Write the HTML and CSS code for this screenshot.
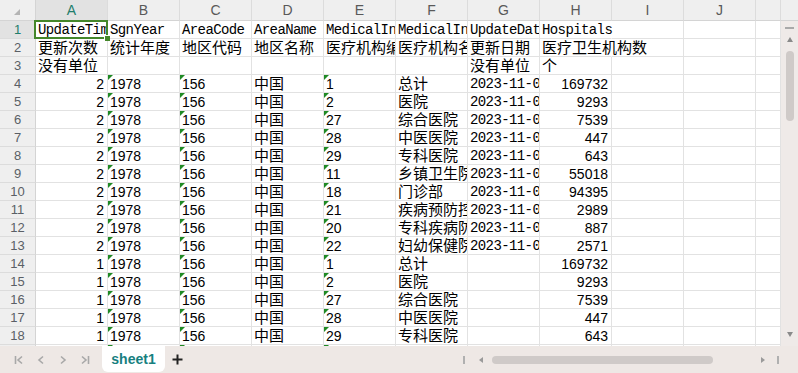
FILE: index.html
```html
<!DOCTYPE html>
<html lang="zh">
<head>
<meta charset="utf-8">
<title>sheet1</title>
<link rel="stylesheet" href="styles.css">
</head>
<body>
<div class="app">
  <div class="main">
    <div class="sheet">
      <div class="corner"><svg width="6" height="6" viewBox="0 0 6 6"><polygon points="6,0 6,6 0,6" fill="#b4b4b4"/></svg></div>
      <div class="ch on">A</div><div class="ch">B</div><div class="ch">C</div><div class="ch">D</div><div class="ch">E</div><div class="ch">F</div><div class="ch">G</div><div class="ch">H</div><div class="ch">I</div><div class="ch">J</div><div class="ch"></div>

      <div class="rh on">1</div><div class="c m">UpdateTime</div><div class="c m">SgnYear</div><div class="c m">AreaCode</div><div class="c m">AreaName</div><div class="c m">MedicalInstitutionCode</div><div class="c m">MedicalInstitutionName</div><div class="c m">UpdateDate</div><div class="c m spill">Hospitals</div><div class="c"></div><div class="c"></div><div class="c"></div>
      <div class="rh">2</div><div class="c">更新次数</div><div class="c">统计年度</div><div class="c">地区代码</div><div class="c">地区名称</div><div class="c">医疗机构编码</div><div class="c">医疗机构名称</div><div class="c">更新日期</div><div class="c spill">医疗卫生机构数</div><div class="c"></div><div class="c"></div><div class="c"></div>
      <div class="rh">3</div><div class="c">没有单位</div><div class="c"></div><div class="c"></div><div class="c"></div><div class="c"></div><div class="c"></div><div class="c">没有单位</div><div class="c">个</div><div class="c"></div><div class="c"></div><div class="c"></div>

      <div class="rh">4</div><div class="c n r">2</div><div class="c n t">1978</div><div class="c n t">156</div><div class="c">中国</div><div class="c n t">1</div><div class="c">总计</div><div class="c m">2023-11-01</div><div class="c n r">169732</div><div class="c"></div><div class="c"></div><div class="c"></div>
      <div class="rh">5</div><div class="c n r">2</div><div class="c n t">1978</div><div class="c n t">156</div><div class="c">中国</div><div class="c n t">2</div><div class="c">医院</div><div class="c m">2023-11-01</div><div class="c n r">9293</div><div class="c"></div><div class="c"></div><div class="c"></div>
      <div class="rh">6</div><div class="c n r">2</div><div class="c n t">1978</div><div class="c n t">156</div><div class="c">中国</div><div class="c n t">27</div><div class="c">综合医院</div><div class="c m">2023-11-01</div><div class="c n r">7539</div><div class="c"></div><div class="c"></div><div class="c"></div>
      <div class="rh">7</div><div class="c n r">2</div><div class="c n t">1978</div><div class="c n t">156</div><div class="c">中国</div><div class="c n t">28</div><div class="c">中医医院</div><div class="c m">2023-11-01</div><div class="c n r">447</div><div class="c"></div><div class="c"></div><div class="c"></div>
      <div class="rh">8</div><div class="c n r">2</div><div class="c n t">1978</div><div class="c n t">156</div><div class="c">中国</div><div class="c n t">29</div><div class="c">专科医院</div><div class="c m">2023-11-01</div><div class="c n r">643</div><div class="c"></div><div class="c"></div><div class="c"></div>
      <div class="rh">9</div><div class="c n r">2</div><div class="c n t">1978</div><div class="c n t">156</div><div class="c">中国</div><div class="c n t">11</div><div class="c">乡镇卫生院</div><div class="c m">2023-11-01</div><div class="c n r">55018</div><div class="c"></div><div class="c"></div><div class="c"></div>
      <div class="rh">10</div><div class="c n r">2</div><div class="c n t">1978</div><div class="c n t">156</div><div class="c">中国</div><div class="c n t">18</div><div class="c">门诊部</div><div class="c m">2023-11-01</div><div class="c n r">94395</div><div class="c"></div><div class="c"></div><div class="c"></div>
      <div class="rh">11</div><div class="c n r">2</div><div class="c n t">1978</div><div class="c n t">156</div><div class="c">中国</div><div class="c n t">21</div><div class="c">疾病预防控制中心</div><div class="c m">2023-11-01</div><div class="c n r">2989</div><div class="c"></div><div class="c"></div><div class="c"></div>
      <div class="rh">12</div><div class="c n r">2</div><div class="c n t">1978</div><div class="c n t">156</div><div class="c">中国</div><div class="c n t">20</div><div class="c">专科疾病防治院</div><div class="c m">2023-11-01</div><div class="c n r">887</div><div class="c"></div><div class="c"></div><div class="c"></div>
      <div class="rh">13</div><div class="c n r">2</div><div class="c n t">1978</div><div class="c n t">156</div><div class="c">中国</div><div class="c n t">22</div><div class="c">妇幼保健院</div><div class="c m">2023-11-01</div><div class="c n r">2571</div><div class="c"></div><div class="c"></div><div class="c"></div>
      <div class="rh">14</div><div class="c n r">1</div><div class="c n t">1978</div><div class="c n t">156</div><div class="c">中国</div><div class="c n t">1</div><div class="c">总计</div><div class="c"></div><div class="c n r">169732</div><div class="c"></div><div class="c"></div><div class="c"></div>
      <div class="rh">15</div><div class="c n r">1</div><div class="c n t">1978</div><div class="c n t">156</div><div class="c">中国</div><div class="c n t">2</div><div class="c">医院</div><div class="c"></div><div class="c n r">9293</div><div class="c"></div><div class="c"></div><div class="c"></div>
      <div class="rh">16</div><div class="c n r">1</div><div class="c n t">1978</div><div class="c n t">156</div><div class="c">中国</div><div class="c n t">27</div><div class="c">综合医院</div><div class="c"></div><div class="c n r">7539</div><div class="c"></div><div class="c"></div><div class="c"></div>
      <div class="rh">17</div><div class="c n r">1</div><div class="c n t">1978</div><div class="c n t">156</div><div class="c">中国</div><div class="c n t">28</div><div class="c">中医医院</div><div class="c"></div><div class="c n r">447</div><div class="c"></div><div class="c"></div><div class="c"></div>
      <div class="rh">18</div><div class="c n r">1</div><div class="c n t">1978</div><div class="c n t">156</div><div class="c">中国</div><div class="c n t">29</div><div class="c">专科医院</div><div class="c"></div><div class="c n r">643</div><div class="c"></div><div class="c"></div><div class="c"></div>
      <div class="rh">19</div><div class="c n r">1</div><div class="c n t">1978</div><div class="c n t">156</div><div class="c">中国</div><div class="c n t">11</div><div class="c">乡镇卫生院</div><div class="c"></div><div class="c n r">55018</div><div class="c"></div><div class="c"></div><div class="c"></div>

      <div class="selbox"><span class="handle"></span></div>
    </div>
    <div class="vscroll">
      <div class="vs-head"></div>
      <div class="vs-track">
        <span class="vs-dash"></span>
        <svg class="vs-up" width="6" height="5" viewBox="0 0 6 5"><polygon points="3,0 6,5 0,5" fill="#8a8a8a"/></svg>
        <span class="vs-thumb"></span>
        <span class="vs-fill"></span>
        <svg class="vs-down" width="6" height="5" viewBox="0 0 6 5"><polygon points="0,0 6,0 3,5" fill="#8a8a8a"/></svg>
      </div>
    </div>
  </div>
  <div class="tabbar">
    <div class="nav">
      <svg width="10" height="10" viewBox="0 0 10 10"><path d="M1.5 1v8M8 1.5L4 5l4 3.5" fill="none" stroke="#a8a8a8" stroke-width="1.6"/></svg>
      <svg width="10" height="10" viewBox="0 0 10 10"><path d="M7 1.5L3 5l4 3.5" fill="none" stroke="#a8a8a8" stroke-width="1.6"/></svg>
      <svg width="10" height="10" viewBox="0 0 10 10"><path d="M3 1.5L7 5l-4 3.5" fill="none" stroke="#a8a8a8" stroke-width="1.6"/></svg>
      <svg width="10" height="10" viewBox="0 0 10 10"><path d="M2 1.5L6 5l-4 3.5M8.5 1v8" fill="none" stroke="#a8a8a8" stroke-width="1.6"/></svg>
    </div>
    <div class="tab">sheet1</div>
    <svg class="plus" width="11" height="11" viewBox="0 0 11 11"><path d="M5.5 0.5v10M0.5 5.5h10" stroke="#222" stroke-width="2"/></svg>
    <div class="hscroll">
      <span class="hs-bar"></span>
      <svg class="hs-left" width="4" height="6" viewBox="0 0 4 6"><polygon points="4,0 4,6 0,3" fill="#9a9a9a"/></svg>
      <span class="hs-thumb"></span>
      <svg class="hs-right" width="4" height="6" viewBox="0 0 4 6"><polygon points="0,0 4,3 0,6" fill="#9a9a9a"/></svg>
      <span class="hs-bar end"></span>
    </div>
  </div>
</div>
</body>
</html>
```

FILE: styles.css
```css
* { box-sizing: border-box; margin: 0; padding: 0; }
html, body { width: 798px; height: 373px; overflow: hidden; background: #fff; }
body { font-family: "Liberation Sans", "Noto Sans CJK SC", sans-serif; }

.app { display: flex; flex-direction: column; height: 373px; }
.main { display: flex; height: 346px; }

.sheet {
  position: relative;
  display: grid;
  grid-template-columns: 36px repeat(10, 72px) 25px;
  grid-template-rows: 21px;
  grid-auto-rows: 18px;
  align-content: start;
  width: 781px;
  height: 346px;
  overflow: hidden;
}

.corner {
  background: #efefef;
  border-right: 1px solid #d4d4d4;
  border-bottom: 1px solid #d4d4d4;
  display: flex;
  align-items: flex-start;
  justify-content: flex-start;
  padding: 9px 0 0 14px;
}

.ch {
  background: #efefef;
  border-right: 1px solid #dcdcdc;
  border-bottom: 1px solid #d4d4d4;
  text-align: center;
  font-size: 14px;
  line-height: 20px;
  color: #595959;
}
.rh {
  background: #efefef;
  border-right: 1px solid #d4d4d4;
  border-bottom: 1px solid #dcdcdc;
  text-align: center;
  font-size: 13px;
  line-height: 17px;
  color: #5a5f66;
}
.ch.on, .rh.on { background: #e2e2e2; color: #1f7d6b; }

.c {
  position: relative;
  border-right: 1px solid #e2e2e2;
  border-bottom: 1px solid #e2e2e2;
  overflow: hidden;
  white-space: nowrap;
  padding: 0 2px;
  font-family: "Noto Sans CJK SC", sans-serif;
  font-size: 15px;
  line-height: 16px;
  color: #000;
}
.c.m {
  font-family: "Liberation Mono", "Noto Sans CJK SC", monospace;
  font-size: 14px;
  letter-spacing: -0.6px;
  line-height: 18px;
}
.c.n {
  font-family: "Liberation Sans", sans-serif;
  font-size: 14px;
  line-height: 19px;
}
.c.r { text-align: right; padding-right: 3px; }
.c.spill { overflow: visible; border-right-color: transparent; z-index: 1; }

.c.t::before {
  content: "";
  position: absolute;
  left: 0;
  top: 0;
  border-top: 5px solid #1f8a24;
  border-right: 5px solid transparent;
}

.selbox {
  position: absolute;
  grid-column: 2 / 3;
  grid-row: 2 / 3;
  top: -1px;
  left: -2px;
  right: 0;
  bottom: 0;
  border: 2px solid #44872a;
  z-index: 2;
}
.handle {
  position: absolute;
  right: -4px;
  bottom: -4px;
  width: 6px;
  height: 6px;
  background: #44872a;
  border-left: 1px solid #fff;
  border-top: 1px solid #fff;
}

.vscroll { width: 17px; display: flex; flex-direction: column; }
.vs-head { height: 21px; background: #efefef; border-bottom: 1px solid #d4d4d4; }
.vs-track {
  flex: 1;
  background: #efeae8;
  display: flex;
  flex-direction: column;
  align-items: center;
}
.vs-dash { width: 9px; height: 2px; background: #a9a9a9; margin-top: 6px; }
.vs-up { margin-top: 8px; }
.vs-thumb { width: 8px; height: 70px; border-radius: 4px; background: #cfcac8; margin-top: 9px; }
.vs-fill { flex: 1; }
.vs-down { margin-bottom: 9px; }

.tabbar {
  height: 27px;
  background: #eee8e5;
  display: flex;
  align-items: center;
}
.nav {
  width: 102px;
  display: flex;
  align-items: center;
  gap: 12px;
  padding-left: 14px;
}
.tab {
  align-self: flex-start;
  width: 63px;
  height: 26px;
  background: #fff;
  border-radius: 0 0 6px 6px;
  display: flex;
  align-items: center;
  justify-content: center;
  font-family: "Liberation Sans", sans-serif;
  font-weight: bold;
  font-size: 14px;
  color: #17807f;
}
.plus { margin-left: 7px; }
.hscroll {
  margin-left: auto;
  margin-right: 17px;
  width: 318px;
  display: flex;
  align-items: center;
}
.hs-bar { width: 2px; height: 8px; background: #b0b0b0; }
.hs-bar.end { margin-left: 12px; }
.hs-left { margin-left: 14px; }
.hs-thumb { width: 221px; height: 8px; border-radius: 4px; background: #cfcac8; margin-left: 9px; }
.hs-right { margin-left: 48px; }
```
